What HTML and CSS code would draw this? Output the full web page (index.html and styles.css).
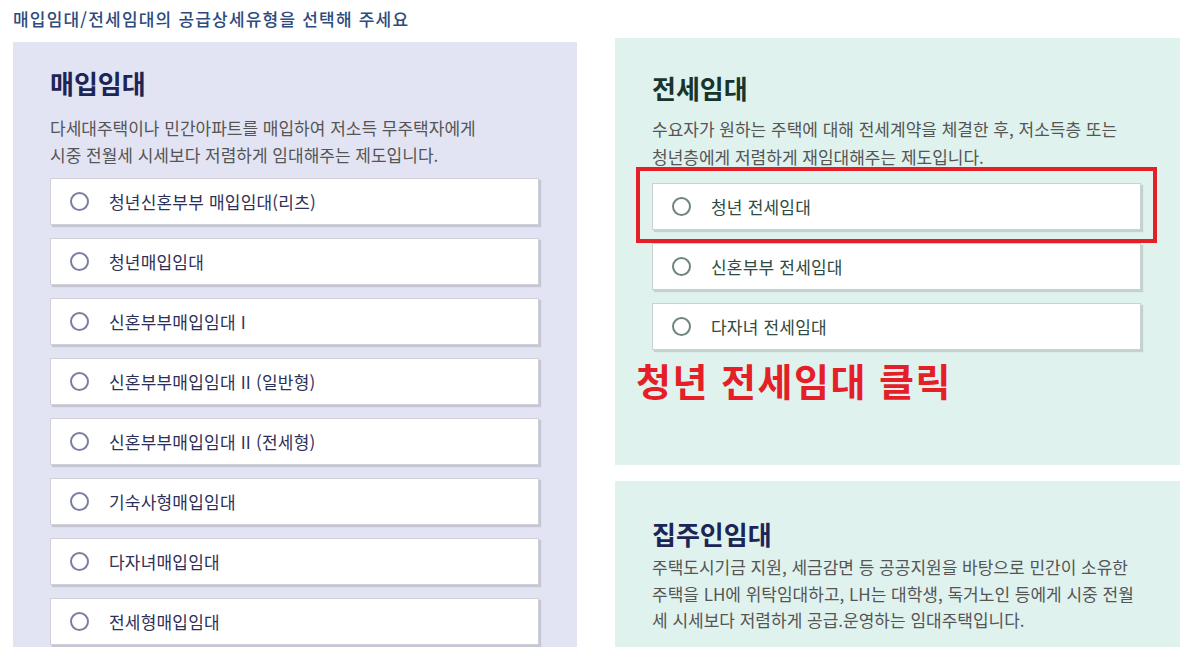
FILE: index.html
```html
<!DOCTYPE html>
<html lang="ko">
<head>
<meta charset="utf-8">
<title>공급상세유형 선택</title>
<link rel="stylesheet" href="styles.css">
</head>
<body>
<h1 class="page-title">매입임대/전세임대의 공급상세유형을 선택해 주세요</h1>
<div class="columns">
  <section class="panel panel-buy">
    <h2 class="panel-title">매입임대</h2>
    <p class="panel-desc">다세대주택이나 민간아파트를 매입하여 저소득 무주택자에게<br>시중 전월세 시세보다 저렴하게 임대해주는 제도입니다.</p>
    <ul class="options">
      <li class="option"><span class="radio"></span><span class="label">청년신혼부부 매입임대(리츠)</span></li>
      <li class="option"><span class="radio"></span><span class="label">청년매입임대</span></li>
      <li class="option"><span class="radio"></span><span class="label">신혼부부매입임대 I</span></li>
      <li class="option"><span class="radio"></span><span class="label">신혼부부매입임대 II (일반형)</span></li>
      <li class="option"><span class="radio"></span><span class="label">신혼부부매입임대 II (전세형)</span></li>
      <li class="option"><span class="radio"></span><span class="label">기숙사형매입임대</span></li>
      <li class="option"><span class="radio"></span><span class="label">다자녀매입임대</span></li>
      <li class="option"><span class="radio"></span><span class="label">전세형매입임대</span></li>
    </ul>
  </section>
  <div class="right-col">
    <section class="panel panel-jeonse">
      <h2 class="panel-title">전세임대</h2>
      <p class="panel-desc">수요자가 원하는 주택에 대해 전세계약을 체결한 후, 저소득층 또는<br>청년층에게 저렴하게 재임대해주는 제도입니다.</p>
      <ul class="options">
        <li class="option highlighted"><span class="radio"></span><span class="label">청년 전세임대</span><span class="mark-box"></span></li>
        <li class="option"><span class="radio"></span><span class="label">신혼부부 전세임대</span></li>
        <li class="option"><span class="radio"></span><span class="label">다자녀 전세임대</span></li>
      </ul>
      <p class="annotation">청년 전세임대 클릭</p>
    </section>
    <section class="panel panel-owner">
      <h2 class="panel-title">집주인임대</h2>
      <p class="panel-desc">주택도시기금 지원, 세금감면 등 공공지원을 바탕으로 민간이 소유한<br>주택을 LH에 위탁임대하고, LH는 대학생, 독거노인 등에게 시중 전월<br>세 시세보다 저렴하게 공급.운영하는 임대주택입니다.</p>
    </section>
  </div>
</div>
</body>
</html>
```

FILE: styles.css
```css
* { box-sizing: border-box; }

html, body {
  margin: 0;
  padding: 0;
  background: #ffffff;
  overflow: hidden;
}

body {
  font-family: "Noto Sans CJK KR", "Noto Sans", sans-serif;
  color: #555555;
}

.page-title {
  margin: 0;
  padding: 7px 0 0 13px;
  font-size: 17px;
  line-height: 24px;
  font-weight: 500;
  letter-spacing: 1.2px;
  color: #2d4b7d;
}

.columns {
  display: grid;
  grid-template-columns: 564px 565px;
  column-gap: 38px;
  margin: 7px 0 0 13px;
  align-items: start;
}

.panel {
  padding-left: 37px;
}

.panel-buy {
  margin-top: 4px;
  background: #e2e4f4;
  padding-top: 24px;
  padding-right: 38px;
  padding-bottom: 40px;
}

.right-col {
  display: flex;
  flex-direction: column;
  gap: 16px;
}

.panel-jeonse {
  background: #dff2ee;
  padding-top: 33px;
  padding-right: 39px;
  height: 427px;
}

.panel-owner {
  background: #dff2ee;
  padding-top: 36px;
  padding-right: 20px;
  padding-bottom: 40px;
}

.panel-title {
  margin: 0;
  font-size: 26px;
  line-height: 34px;
  font-weight: 700;
  color: #1d2456;
}

.panel-jeonse .panel-title { color: #17352d; }

.panel-desc {
  margin: 13.5px 0 0;
  font-size: 17px;
  line-height: 27px;
  color: #555555;
}

.panel-jeonse .panel-desc {
  margin-top: 10px;
  line-height: 28px;
}

.panel-owner .panel-desc {
  margin-top: 3px;
  line-height: 26.5px;
}

.options {
  list-style: none;
  margin: 10.5px 0 0;
  padding: 0;
  display: flex;
  flex-direction: column;
  gap: 13px;
}

.panel-jeonse .options { margin-top: 12px; }

.option {
  position: relative;
  display: flex;
  align-items: center;
  gap: 20px;
  height: 47px;
  padding-left: 19px;
  background: #ffffff;
  border: 1px solid #cfd0da;
  box-shadow: 2px 2px 1px rgba(0, 0, 0, 0.13);
}

.panel-jeonse .option { border-color: #c8d2ce; }

.radio {
  flex: none;
  width: 19px;
  height: 19px;
  border-radius: 50%;
  border: 2px solid #7b7f9f;
  background: #ffffff;
}

.panel-jeonse .radio { border-color: #6e847c; }

.label {
  font-size: 17px;
  line-height: 24px;
  letter-spacing: 0.2px;
  color: #2d3158;
}

.panel-jeonse .label { color: #2e4a41; }

.mark-box {
  position: absolute;
  top: -17px;
  left: -17px;
  right: -17px;
  bottom: -14px;
  border: 4px solid #e41f27;
  pointer-events: none;
}

.annotation {
  margin: 8px 0 0 -16px;
  font-size: 38px;
  line-height: 44px;
  font-weight: 700;
  letter-spacing: 1.5px;
  color: #e41f27;
}
```
